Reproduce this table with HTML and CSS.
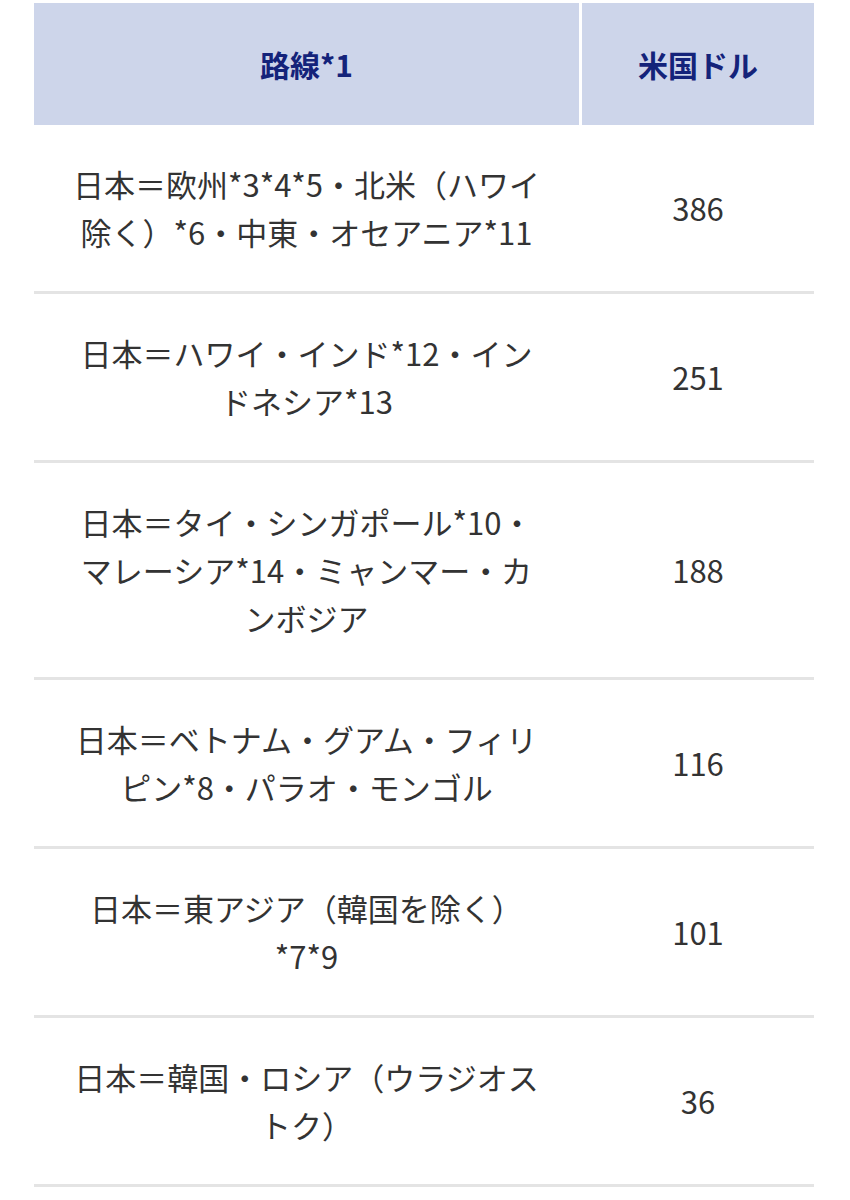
FILE: index.html
```html
<!DOCTYPE html>
<html lang="ja">
<head>
<meta charset="utf-8">
<link rel="stylesheet" href="styles.css">
</head>
<body>
<div class="table">
  <div class="head">
    <div class="hcell">路線*1</div>
    <div class="hcell">米国ドル</div>
  </div>
  <div class="row">
    <div class="route">日本＝欧州*3*4*5・北米（ハワイ除く）*6・中東・オセアニア*11</div>
    <div class="amount">386</div>
  </div>
  <div class="row">
    <div class="route">日本＝ハワイ・インド*12・インドネシア*13</div>
    <div class="amount">251</div>
  </div>
  <div class="row">
    <div class="route">日本＝タイ・シンガポール*10・マレーシア*14・ミャンマー・カンボジア</div>
    <div class="amount">188</div>
  </div>
  <div class="row">
    <div class="route">日本＝ベトナム・グアム・フィリピン*8・パラオ・モンゴル</div>
    <div class="amount">116</div>
  </div>
  <div class="row">
    <div class="route">日本＝東アジア（韓国を除く）*7*9</div>
    <div class="amount">101</div>
  </div>
  <div class="row">
    <div class="route">日本＝韓国・ロシア（ウラジオストク）</div>
    <div class="amount">36</div>
  </div>
</div>
</body>
</html>
```
FILE: styles.css
```css
html, body {
  margin: 0;
  padding: 0;
  background: #ffffff;
}
body {
  padding: 3px 36px 0 34px;
  font-family: "Noto Sans CJK JP", "Noto Sans", sans-serif;
  color: #333333;
}
.table {
  width: 780px;
}
.head,
.row {
  display: grid;
  grid-template-columns: 545px 232px;
  column-gap: 3px;
}
.hcell {
  background: #cdd5ea;
  height: 122px;
  display: flex;
  align-items: center;
  justify-content: center;
  font-size: 30px;
  font-weight: 700;
  color: #14237a;
}
.row {
  border-bottom: 3px solid #e4e4e4;
  align-items: center;
}
.route {
  padding: 35px 34px;
  font-size: 31px;
  line-height: 48px;
  text-align: center;
}
.amount {
  font-size: 31px;
  line-height: 48px;
  text-align: center;
}
```
